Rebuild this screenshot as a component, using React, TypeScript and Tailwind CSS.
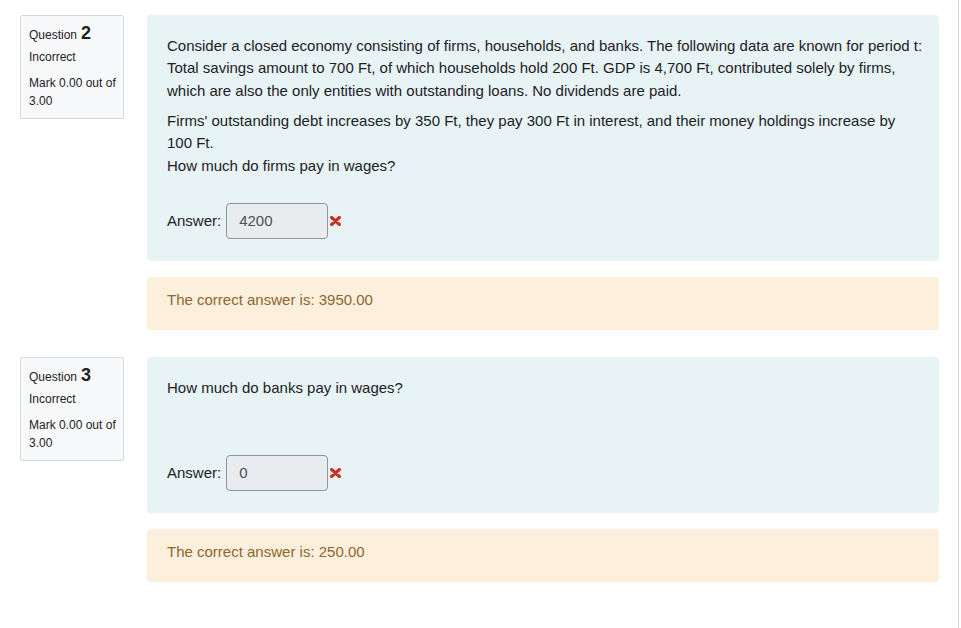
import React from "react";

const font = { fontFamily: '"Liberation Sans", Arial, sans-serif' };

function RedX() {
  return (
    <svg width="11" height="10" viewBox="0 0 11 10" className="ml-[2px] shrink-0">
      <path d="M1.6 1.5 L9.4 8.5 M9.4 1.5 L1.6 8.5" stroke="#ca3120" strokeWidth="3.2" strokeLinecap="round" />
    </svg>
  );
}

function Info({ no }: { no: number }) {
  return (
    <div className="w-[104px] shrink-0 self-start rounded-[2px] border border-[#d3d8dd] bg-[#f8f9fa] py-[8px] pl-[8px] pr-[4px] text-[#1d2125]">
      <div className="flex items-baseline leading-none">
        <span className="text-[12px]">Question</span>
        <span className="ml-[4px] text-[18px] font-bold">{no}</span>
      </div>
      <div className="mt-[6px] text-[12px] leading-[18px]">Incorrect</div>
      <div className="mt-[8px] text-[12px] leading-[18px]">Mark 0.00 out of 3.00</div>
    </div>
  );
}

function AnswerRow({ value }: { value: string }) {
  return (
    <div className="mt-[26px] flex items-center">
      <span className="mr-[5px]">Answer:</span>
      <div className="flex h-[36px] w-[102px] items-center rounded-[4px] border border-[#8f959e] bg-[#e9ecef] pl-[12px] text-[#495057]">
        {value}
      </div>
      <RedX />
    </div>
  );
}

function Feedback({ text }: { text: string }) {
  return (
    <div className="mt-[16.5px] rounded-[4px] bg-[#fcefdc] pl-[20px] pr-[20px] pt-[12px] pb-[18px] text-[#8e662e]">
      {text}
    </div>
  );
}

export default function App() {
  return (
    <div style={font} className="flex min-h-[628px] w-full bg-white text-[15px] leading-[22.5px] text-[#1d2125]">
      <div className="w-[958px] shrink-0 pl-[20px] pr-[19px] pt-[15px]">
        <div className="flex gap-[23px]">
          <Info no={2} />
          <div className="flex-1">
            <div className="rounded-[4px] bg-[#e7f3f5] pl-[20px] pr-[14px] pt-[19.5px] pb-[21.5px]">
              <p className="mb-[7.5px]">
                Consider a closed economy consisting of firms, households, and banks. The following data are known for period t: Total savings amount to 700 Ft, of which households hold 200 Ft. GDP is 4,700 Ft, contributed solely by firms, which are also the only entities with outstanding loans. No dividends are paid.
              </p>
              <div>
                <p>
                  Firms' outstanding debt increases by 350 Ft, they pay 300 Ft in interest, and their money holdings increase by 100{"\u00a0"}Ft.
                </p>
                <p>How much do firms pay in wages?</p>
              </div>
              <AnswerRow value="4200" />
            </div>
            <Feedback text="The correct answer is: 3950.00" />
          </div>
        </div>

        <div className="mt-[27.5px] flex gap-[23px]">
          <Info no={3} />
          <div className="flex-1">
            <div className="rounded-[4px] bg-[#e7f3f5] pl-[20px] pr-[14px] pt-[19.5px] pb-[21.5px]">
              <p className="mb-[7.5px]">How much do banks pay in wages?</p>
              <p>&nbsp;</p>
              <AnswerRow value="0" />
            </div>
            <Feedback text="The correct answer is: 250.00" />
          </div>
        </div>
      </div>
      <div className="w-px shrink-0 self-stretch bg-[#d6d6d6]" />
    </div>
  );
}
